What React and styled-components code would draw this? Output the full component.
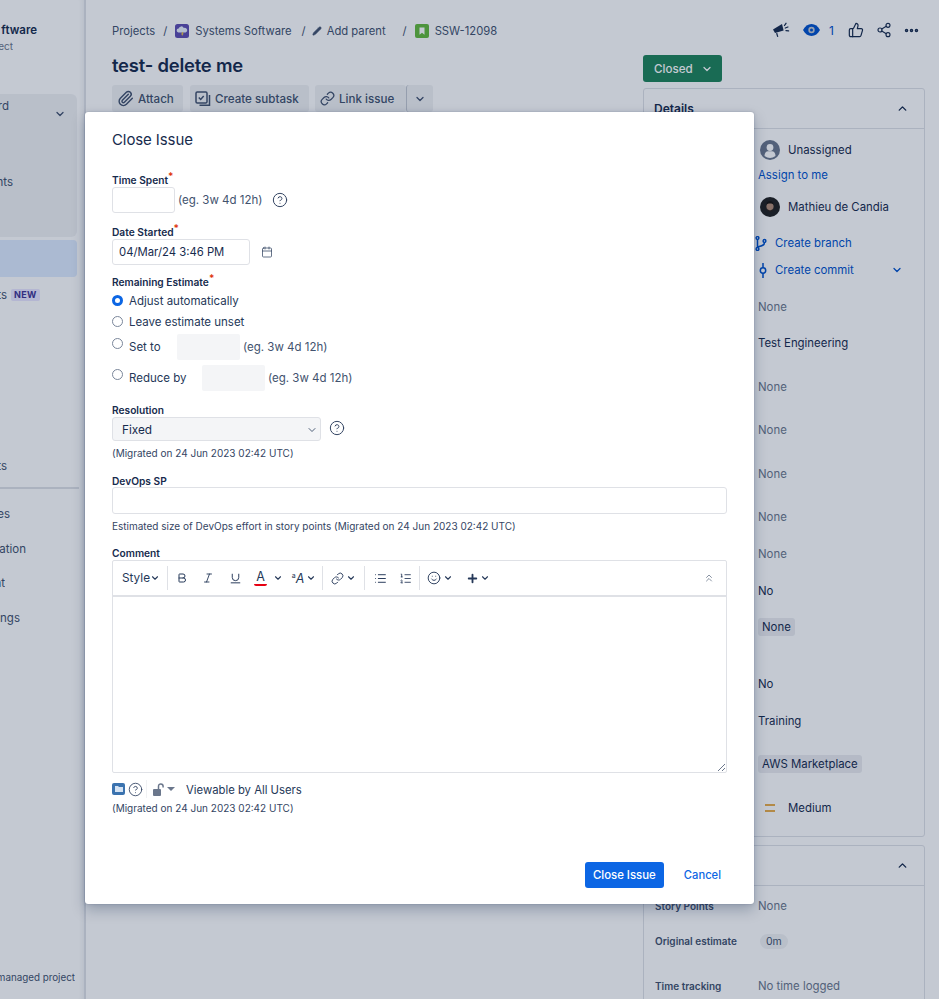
import React from 'react'
import styled, { createGlobalStyle } from 'styled-components'
import {
  Bold, Calendar, ChevronDown, ChevronUp, ChevronsUp, CircleHelp, Ellipsis, Italic, Link,
  List, ListOrdered, Paperclip, Pencil, Plus, Share2, Smile, ThumbsUp, Underline,
} from 'lucide-react'

const GlobalStyle = createGlobalStyle`
  html, body { margin: 0; padding: 0; background: #fff; }
  body { font-family: Inter, "Liberation Sans", sans-serif; color: #172b4d; }
  * { box-sizing: border-box; }
`

const Page = styled.div`
  position: relative;
  display: flex;
  width: 939px;
  height: 999px;
  overflow: hidden;
  font-size: 12px;
`
const Sidebar = styled.aside`
  width: 86px;
  flex: none;
  height: 100%;
  border-right: 2px solid #dfe1e6;
  box-shadow: inset -5px 0 4px -3px #f1f2f4;
  color: #42526e;
`
const SideText = styled.div`
  display: flex;
  justify-content: flex-end;
  align-items: center;
  width: ${p => p.$end}px;
  height: 16px;
  margin-top: ${p => p.$mt || 0}px;
  overflow: hidden;
  white-space: nowrap;
  font-size: ${p => p.$size || 11.5}px;
  font-weight: ${p => p.$weight || 400};
  color: ${p => p.$color || '#42526e'};
`
const SidePanel = styled.div`
  position: relative;
  width: 77px;
  height: 143px;
  margin-top: 40px;
  padding-top: 4px;
  border-radius: 0 6px 6px 0;
  background: #f1f2f4;
`
const SideChevron = styled.span`
  position: absolute;
  left: 54px;
  top: 14px;
  display: flex;
`
const SideActive = styled.div`
  width: 77px;
  height: 37px;
  margin-top: 3px;
  border-radius: 0 4px 4px 0;
  background: #deebff;
`
const SideRow = styled.div`
  display: flex;
  align-items: center;
  gap: 4px;
  margin-top: 10px;
`
const NewTag = styled.span`
  padding: 1px 3px;
  border-radius: 2px;
  background: #eae6ff;
  color: #403294;
  font-size: 9px;
  font-weight: 700;
  letter-spacing: .3px;
  line-height: 10px;
`
const SideDivider = styled.div`
  width: 79px;
  height: 2px;
  margin-top: 13px;
  background: #dfe1e6;
`

const Main = styled.main`
  width: 557px;
  flex: none;
  padding: 21px 0 0 26px;
`
const Crumbs = styled.nav`
  display: flex;
  align-items: center;
  height: 20px;
  font-size: 11.25px;
  color: #42526e;
`
const Crumb = styled.span`
  margin-left: ${p => p.$ml || 0}px;
  white-space: nowrap;
`
const CrumbIcon = styled.span`
  display: flex;
  margin-left: ${p => p.$ml || 0}px;
`
const Title = styled.h1`
  margin: 12px 0 0;
  height: 24px;
  font-size: 18.4px;
  line-height: 24px;
  font-weight: 600;
  letter-spacing: -.2px;
  color: #172b4d;
`
const Actions = styled.div`
  display: flex;
  margin-top: 8px;
`
const ActionButton = styled.button`
  display: flex;
  align-items: center;
  gap: 4px;
  width: ${p => p.$w}px;
  height: 27px;
  margin-left: ${p => p.$ml || 0}px;
  padding: 0 5px;
  border: 0;
  border-radius: 3px;
  background: #f1f2f4;
  font: 500 11.6px Inter, "Liberation Sans", sans-serif;
  color: #42526e;
  white-space: nowrap;
`
const SplitChevron = styled(ActionButton)`
  justify-content: center;
  border-left: 1px solid #c1c7d0;
`

const Side = styled.section`
  width: 282px;
  flex: none;
  padding-top: 20px;
`
const TopIcons = styled.div`
  position: relative;
  height: 20px;
  display: flex;
  align-items: center;
  color: #172b4d;
  padding-left: 129px;
`
const TopItem = styled.span`
  display: flex;
  align-items: center;
  margin-left: ${p => p.$ml || 0}px;
`
const WatchCount = styled.span`
  margin-left: 9px;
  color: #0052cc;
  font-size: 12px;
`
const StatusButton = styled.button`
  display: flex;
  align-items: center;
  gap: 8px;
  width: 79px;
  height: 27px;
  margin-top: 15px;
  padding: 0 0 0 11px;
  border: 0;
  border-radius: 3px;
  background: #1f845a;
  color: #fff;
  font: 500 11.6px Inter, "Liberation Sans", sans-serif;
`
const Panel = styled.div`
  margin-top: ${p => p.$mt}px;
  height: ${p => p.$h}px;
  border: 1px solid #dfe1e6;
  border-radius: 3px;
  overflow: hidden;
`
const PanelHead = styled.div`
  display: flex;
  align-items: center;
  justify-content: space-between;
  height: 40px;
  padding: 0 15px 0 10px;
  border-bottom: 1px solid #dfe1e6;
  font-size: 12px;
  font-weight: 600;
`
const ValueList = styled.div`
  padding-left: 114px;
`
const Value = styled.div`
  position: relative;
  display: flex;
  align-items: center;
  gap: ${p => p.$gap || 8}px;
  height: 20px;
  margin-top: ${p => p.$mt || 0}px;
  margin-left: ${p => p.$ml || 0}px;
  font-size: 11.4px;
  white-space: nowrap;
  color: ${p => (p.$muted ? '#6b778c' : p.$link ? '#0052cc' : '#172b4d')};
`
const TagText = styled.span`
  padding: 2px 4px;
  border-radius: 3px;
  background: #ebecf0;
`
const TrailChevron = styled.span`
  position: absolute;
  left: 132px;
  top: 4px;
  display: flex;
`
const TimeRow = styled.div`
  display: flex;
  align-items: center;
  height: 20px;
  margin-top: ${p => p.$mt}px;
  padding-left: 11px;
`
const TimeLabel = styled.span`
  width: 103px;
  font-size: 10px;
  font-weight: 600;
  color: #42526e;
  white-space: nowrap;
`
const TimeValue = styled.span`
  font-size: 11.4px;
  color: #6b778c;
`
const Pill = styled.span`
  margin-left: 2px;
  padding: 1px 6px;
  border-radius: 8px;
  background: #f1f2f4;
  font-size: 10.5px;
  color: #42526e;
`

const Backdrop = styled.div`
  position: absolute;
  inset: 0;
  background: rgba(9, 30, 66, .24);
`
const Modal = styled.div`
  position: absolute;
  left: 85px;
  top: 112px;
  width: 669px;
  height: 792px;
  padding: 17px 0 0 27px;
  background: #fff;
  border-radius: 3px;
  box-shadow: 0 0 1px rgba(9, 30, 66, .31), 0 6px 14px rgba(9, 30, 66, .25), 0 0 4px rgba(9, 30, 66, .12);
`
const ModalTitle = styled.h2`
  margin: 0;
  height: 22px;
  font-size: 15px;
  line-height: 22px;
  font-weight: 400;
  letter-spacing: -.1px;
  color: #172b4d;
`
const Label = styled.label`
  display: block;
  height: 13px;
  margin-top: ${p => p.$mt}px;
  font-size: 10.2px;
  line-height: 13px;
  font-weight: 600;
  color: #172b4d;
`
const Required = styled.sup`
  color: #de350b;
  font-size: 10px;
  line-height: 0;
`
const Row = styled.div`
  display: flex;
  align-items: center;
  height: ${p => p.$h || 26}px;
  margin-top: ${p => p.$mt || 0}px;
`
const TextInput = styled.input`
  width: ${p => p.$w}px;
  height: ${p => p.$h || 26}px;
  padding: 0 6px;
  border: 1px solid #dfe1e6;
  border-radius: 3px;
  background: #fff;
  font: 11.3px Inter, "Liberation Sans", sans-serif;
  color: #172b4d;
  outline: 0;
`
const GhostInput = styled.input`
  width: 63px;
  height: 26px;
  border: 0;
  border-radius: 2px;
  background: #f4f5f7;
`
const Hint = styled.span`
  margin-left: 3px;
  font-size: 11.5px;
  color: #42526e;
  white-space: nowrap;
`
const HelpIcon = styled.span`
  display: flex;
  margin-left: ${p => p.$ml}px;
  margin-top: ${p => p.$mt || 0}px;
  color: #344563;
`
const Radio = styled.span`
  flex: none;
  width: 11px;
  height: 11px;
  margin-top: ${p => p.$mt || 0}px;
  border-radius: 50%;
  border: ${p => (p.$on ? '3px solid #0c66e4' : '1px solid #7a869a')};
  box-shadow: ${p => (p.$on ? 'inset 0 0 0 1px #fff' : 'none')};
  background: #fff;
`
const RadioText = styled.span`
  width: ${p => p.$w || 'auto'};
  margin-left: 6px;
  margin-top: ${p => p.$mt || 0}px;
  font-size: 11.5px;
  color: #253858;
  white-space: nowrap;
`
const SelectBox = styled.div`
  display: flex;
  align-items: center;
  justify-content: space-between;
  width: 209px;
  height: 24px;
  padding: 1px 2px 0 9px;
  border: 1px solid #dfe1e6;
  border-radius: 3px;
  background: #f4f5f7;
  font-size: 11.8px;
  color: #172b4d;
`
const Note = styled.div`
  height: 14px;
  margin-top: ${p => p.$mt}px;
  font-size: 10px;
  line-height: 14px;
  color: #344563;
  white-space: nowrap;
`
const Editor = styled.div`
  position: relative;
  width: 615px;
  height: 213px;
  border: 1px solid #dfe1e6;
  border-radius: 2px;
`
const Toolbar = styled.div`
  display: flex;
  align-items: center;
  height: 36px;
  padding-left: 9px;
  border-bottom: 2px solid #dfe1e6;
  color: #253858;
`
const Tool = styled.span`
  display: flex;
  align-items: center;
  justify-content: center;
  width: ${p => p.$w}px;
  margin-left: ${p => p.$ml || 0}px;
  font-size: 11.8px;
`
const ToolSep = styled.span`
  width: 1px;
  height: 24px;
  margin-left: ${p => p.$ml}px;
  background: #dfe1e6;
`
const ColorA = styled.span`
  display: block;
  width: 13px;
  text-align: center;
  font-size: 12.5px;
  line-height: 14px;
  border-bottom: 2.5px solid #e60012;
  border-radius: 0 0 2px 2px;
`
const SmallA = styled.span`
  font-size: 12.5px;
  font-style: italic;
`
const SmallS = styled.span`
  font-size: 7px;
  margin-bottom: 6px;
`
const ResizeGrip = styled.svg`
  position: absolute;
  right: 0;
  bottom: 0;
`
const FolderBadge = styled.span`
  display: flex;
  align-items: center;
  justify-content: center;
  width: 13px;
  height: 12px;
  border-radius: 2px;
  background: #3b73af;
`
const FootSep = styled.span`
  width: 1px;
  height: 18px;
  margin-left: 3px;
  background: #f1f2f4;
`
const FootText = styled.span`
  margin-left: 11px;
  margin-top: 1px;
  font-size: 11.3px;
  color: #253858;
  white-space: nowrap;
`
const ModalActions = styled.div`
  display: flex;
  align-items: center;
  justify-content: flex-end;
  height: 26px;
  margin-top: 47px;
  padding-right: 33px;
`
const PrimaryButton = styled.button`
  width: 79px;
  height: 26px;
  padding: 0;
  border: 0;
  border-radius: 3px;
  background: #0c66e4;
  color: #fff;
  white-space: nowrap;
  font: 500 11.4px Inter, "Liberation Sans", sans-serif;
`
const LinkButton = styled.button`
  margin-left: 20px;
  padding: 0;
  border: 0;
  background: none;
  color: #0c66e4;
  font: 500 11.2px Inter, "Liberation Sans", sans-serif;
`

const Chev = ({ size = 12, color = 'currentColor' }) => <ChevronDown size={size} color={color} strokeWidth={2.6} />

const ProjectIcon = () => (
  <svg width="14" height="14" viewBox="0 0 14 14">
    <rect width="14" height="14" rx="2.5" fill="#5e4db2" />
    <path d="M3.4 8.4a1.9 1.9 0 0 1 .3-3.8 2.7 2.7 0 0 1 5.1-.7 2.2 2.2 0 0 1 1.8 4.5z" fill="#e9f0fb" />
    <path d="M7.4 8 6 10.4h1.3l-.6 2 2-2.9H7.6L8.4 8z" fill="#f5cd47" />
  </svg>
)
const StoryIcon = () => (
  <svg width="14" height="14" viewBox="0 0 14 14">
    <rect width="14" height="14" rx="2" fill="#63ba3c" />
    <path d="M4.5 3.5h5v7.2L7 8.7l-2.5 2z" fill="#fff" />
  </svg>
)
const SubtaskIcon = () => (
  <svg width="16" height="16" viewBox="0 0 16 16" fill="none" stroke="currentColor" strokeWidth="1.5">
    <rect x="1" y="1" width="11" height="11" rx="1.2" />
    <path d="m3.8 6.4 1.9 2 3-3.4" />
    <path d="M14.500 4v10.200H4.500" />
  </svg>
)
const Megaphone = () => (
  <svg width="18" height="16" viewBox="0 0 18 16" fill="#172b4d">
    <path d="M1 7.600 10 2l1.600 6.600L3 11z" />
    <path d="M4 11.200 5.200 15l1.100-.3-1-3.800z" />
    <path d="M12.500 3.500 14 1.300M13.300 6l2.600-1M14 8.600l2.600.3" stroke="#172b4d" strokeWidth="1.300" strokeLinecap="round" />
  </svg>
)
const EyeIcon = () => (
  <svg width="17" height="12" viewBox="0 0 17 12">
    <path d="M0 6c2-3.800 5-6 8.500-6S15 2.200 17 6c-2 3.800-5 6-8.500 6S2 9.800 0 6z" fill="#0052cc" />
    <circle cx="8.500" cy="6" r="3.200" fill="#c4c9d2" />
    <circle cx="8.500" cy="6" r="1.500" fill="#0052cc" />
  </svg>
)
const PersonIcon = () => (
  <svg width="20" height="20" viewBox="0 0 20 20">
    <circle cx="10" cy="10" r="10" fill="#6b778c" />
    <circle cx="10" cy="7.500" r="3.400" fill="#fff" />
    <path d="M4.500 16c0-3.200 1.500-4.800 3.500-4.800h4c2 0 3.500 1.600 3.500 4.800a9.500 9.500 0 0 1-11 0z" fill="#fff" />
  </svg>
)
const FaceAvatar = () => (
  <svg width="20" height="20" viewBox="0 0 20 20">
    <circle cx="10" cy="10" r="10" fill="#20201f" />
    <ellipse cx="10" cy="9.500" rx="3.600" ry="4.600" fill="#b08c76" />
    <path d="M6.200 8c.2-3 2-4 3.800-4s3.600 1 3.800 4c-1.200-1.300-2.200-1.600-3.800-1.600S7.400 6.700 6.200 8z" fill="#17130f" />
    <path d="M7.300 11.500c.8 2.400 4.600 2.400 5.400 0v2.300c-1 1.200-4.400 1.200-5.400 0z" fill="#2a211b" />
  </svg>
)
const BranchIcon = () => (
  <svg width="12" height="15" viewBox="0 0 12 15" fill="none" stroke="#0052cc" strokeWidth="1.500">
    <circle cx="2.500" cy="2" r="1.400" />
    <circle cx="2.500" cy="13" r="1.400" />
    <circle cx="9.500" cy="5" r="1.400" />
    <path d="M2.500 3.500v8M9.500 6.500c0 3-3 3.500-7 4.500" />
  </svg>
)
const CommitIcon = () => (
  <svg width="8" height="15" viewBox="0 0 8 15" fill="none" stroke="#0052cc" strokeWidth="1.500">
    <circle cx="4" cy="7.500" r="2.700" />
    <path d="M4 0v4.800M4 10.200V15" />
  </svg>
)
const MediumIcon = () => (
  <svg width="10" height="8" viewBox="0 0 10 8">
    <path d="M0 1h10M0 7h10" stroke="#e2930f" strokeWidth="1.600" />
  </svg>
)
const FolderIcon = () => (
  <svg width="8" height="6" viewBox="0 0 8 6">
    <path d="M0 0h3l1 1h4v5H0z" fill="#d5e3f3" />
  </svg>
)
const OpenLock = () => (
  <svg width="12" height="13" viewBox="0 0 12 13" fill="none">
    <rect x="0" y="6" width="8" height="7" rx="1" fill="#6b778c" />
    <path d="M5.500 6V3.200a2.300 2.300 0 0 1 4.600 0v1.300" stroke="#6b778c" strokeWidth="1.500" />
  </svg>
)
const Caret = () => (
  <svg width="8" height="4" viewBox="0 0 8 4">
    <path d="M0 0h8L4 4z" fill="#6b778c" />
  </svg>
)

export default function App() {
  return (
    <Page>
      <GlobalStyle />
      <Sidebar>
        <SideText $end={37} $mt={22} $weight={600} $color="#172b4d">ftware</SideText>
        <SideText $end={13} $size={10} $color="#6b778c">ect</SideText>
        <SidePanel>
          <SideText $end={9}>rd</SideText>
          <SideChevron><Chev /></SideChevron>
          <SideText $end={13} $mt={60}>nts</SideText>
        </SidePanel>
        <SideActive />
        <SideRow>
          <SideText $end={7}>ts</SideText>
          <NewTag>NEW</NewTag>
        </SideRow>
        <SideText $end={7} $mt={155}>ts</SideText>
        <SideDivider />
        <SideText $end={10} $mt={17}>es</SideText>
        <SideText $end={26} $mt={19}>ation</SideText>
        <SideText $end={5} $mt={18}>nt</SideText>
        <SideText $end={20} $mt={19}>ngs</SideText>
        <SideText $end={75} $mt={343} $size={9.8}>managed project</SideText>
      </Sidebar>

      <Main>
        <Crumbs>
          <Crumb>Projects</Crumb>
          <Crumb $ml={8}>/</Crumb>
          <CrumbIcon $ml={8}><ProjectIcon /></CrumbIcon>
          <Crumb $ml={6}>Systems Software</Crumb>
          <Crumb $ml={10}>/</Crumb>
          <CrumbIcon $ml={6}><Pencil size={10} fill="#42526e" strokeWidth={1.5} /></CrumbIcon>
          <Crumb $ml={5}>Add parent</Crumb>
          <Crumb $ml={17}>/</Crumb>
          <CrumbIcon $ml={8}><StoryIcon /></CrumbIcon>
          <Crumb $ml={6}>SSW-12098</Crumb>
        </Crumbs>
        <Title>test- delete me</Title>
        <Actions>
          <ActionButton $w={71}><Paperclip size={17} strokeWidth={2} />Attach</ActionButton>
          <ActionButton $w={119} $ml={7}><SubtaskIcon />Create subtask</ActionButton>
          <ActionButton $w={91} $ml={6}><Link size={15} strokeWidth={2} />Link issue</ActionButton>
          <SplitChevron $w={27}><Chev /></SplitChevron>
        </Actions>
      </Main>

      <Side>
        <TopIcons>
          <TopItem><Megaphone /></TopItem>
          <TopItem $ml={13}><EyeIcon /><WatchCount>1</WatchCount></TopItem>
          <TopItem $ml={14}><ThumbsUp size={16} strokeWidth={1.8} /></TopItem>
          <TopItem $ml={12}><Share2 size={16} strokeWidth={1.7} /></TopItem>
          <TopItem $ml={11}><Ellipsis size={17} strokeWidth={3} /></TopItem>
        </TopIcons>
        <StatusButton>Closed<Chev /></StatusButton>
        <Panel $mt={6} $h={749}>
          <PanelHead>Details<ChevronUp size={13} strokeWidth={2.6} /></PanelHead>
          <ValueList>
            <Value $mt={11} $ml={2}><PersonIcon />Unassigned</Value>
            <Value $mt={5} $link>Assign to me</Value>
            <Value $mt={12} $ml={2}><FaceAvatar />Mathieu de Candia</Value>
            <Value $mt={16} $ml={-3} $link><BranchIcon />Create branch</Value>
            <Value $mt={7} $ml={1} $link $gap={8}><CommitIcon />Create commit<TrailChevron><Chev /></TrailChevron></Value>
            <Value $mt={17} $muted>None</Value>
            <Value $mt={16}>Test Engineering</Value>
            <Value $mt={24} $muted>None</Value>
            <Value $mt={23} $muted>None</Value>
            <Value $mt={24} $muted>None</Value>
            <Value $mt={23} $muted>None</Value>
            <Value $mt={17} $muted>None</Value>
            <Value $mt={17}>No</Value>
            <Value $mt={16}><TagText>None</TagText></Value>
            <Value $mt={37}>No</Value>
            <Value $mt={17}>Training</Value>
            <Value $mt={23}><TagText>AWS Marketplace</TagText></Value>
            <Value $mt={24} $ml={7} $gap={13}><MediumIcon />Medium</Value>
          </ValueList>
        </Panel>
        <Panel $mt={8} $h={160}>
          <PanelHead><span />
            <ChevronUp size={13} strokeWidth={2.6} />
          </PanelHead>
          <TimeRow $mt={10}><TimeLabel>Story Points</TimeLabel><TimeValue>None</TimeValue></TimeRow>
          <TimeRow $mt={15}><TimeLabel>Original estimate</TimeLabel><Pill>0m</Pill></TimeRow>
          <TimeRow $mt={25}><TimeLabel>Time tracking</TimeLabel><TimeValue>No time logged</TimeValue></TimeRow>
        </Panel>
      </Side>

      <Backdrop />

      <Modal>
        <ModalTitle>Close Issue</ModalTitle>

        <Label $mt={23}>Time Spent<Required>*</Required></Label>
        <Row>
          <TextInput $w={63} />
          <Hint>(eg. 3w 4d 12h)</Hint>
          <HelpIcon $ml={9}><CircleHelp size={16} strokeWidth={1.5} /></HelpIcon>
        </Row>

        <Label $mt={13}>Date Started<Required>*</Required></Label>
        <Row>
          <TextInput $w={138} defaultValue="04/Mar/24 3:46 PM" />
          <HelpIcon $ml={11}><Calendar size={12} strokeWidth={1.5} /></HelpIcon>
        </Row>

        <Label $mt={11}>Remaining Estimate<Required>*</Required></Label>
        <Row $h={20} $mt={1}><Radio $on /><RadioText $mt={1}>Adjust automatically</RadioText></Row>
        <Row $h={20} $mt={1}><Radio /><RadioText $mt={1}>Leave estimate unset</RadioText></Row>
        <Row $mt={3}>
          <Radio $mt={-8} />
          <RadioText $w="48px" $mt={-1}>Set to</RadioText>
          <GhostInput />
          <Hint>(eg. 3w 4d 12h)</Hint>
        </Row>
        <Row $mt={5}>
          <Radio $mt={-8} />
          <RadioText $w="73px" $mt={-1}>Reduce by</RadioText>
          <GhostInput />
          <Hint>(eg. 3w 4d 12h)</Hint>
        </Row>

        <Label $mt={13}>Resolution</Label>
        <Row $h={24}>
          <SelectBox>Fixed<ChevronDown size={12} color="#253858" strokeWidth={1.6} /></SelectBox>
          <HelpIcon $ml={8} $mt={-3}><CircleHelp size={16} strokeWidth={1.5} /></HelpIcon>
        </Row>
        <Note $mt={5}>(Migrated on 24 Jun 2023 02:42 UTC)</Note>

        <Label $mt={15}>DevOps SP</Label>
        <Row $h={27} $mt={-1}><TextInput $w={615} $h={27} /></Row>
        <Note $mt={5}>Estimated size of DevOps effort in story points (Migrated on 24 Jun 2023 02:42 UTC)</Note>

        <Label $mt={14}>Comment</Label>
        <Editor>
          <Toolbar>
            <Tool $w={28}>Style</Tool>
            <Tool $w={10}><Chev size={10} /></Tool>
            <ToolSep $ml={7} />
            <Tool $w={14} $ml={7}><Bold size={12} strokeWidth={2} /></Tool>
            <Tool $w={14} $ml={12}><Italic size={12} strokeWidth={1.8} /></Tool>
            <Tool $w={14} $ml={13}><Underline size={13} strokeWidth={1.8} /></Tool>
            <Tool $w={13} $ml={12}><ColorA>A</ColorA></Tool>
            <Tool $w={10} $ml={6}><Chev size={10} /></Tool>
            <Tool $w={16} $ml={7}><SmallS>a</SmallS><SmallA>A</SmallA></Tool>
            <Tool $w={10}><Chev size={10} /></Tool>
            <ToolSep $ml={6} />
            <Tool $w={14} $ml={7}><Link size={13} strokeWidth={1.7} /></Tool>
            <Tool $w={10} $ml={2}><Chev size={10} /></Tool>
            <ToolSep $ml={8} />
            <Tool $w={14} $ml={8}><List size={13} strokeWidth={1.8} /></Tool>
            <Tool $w={14} $ml={11}><ListOrdered size={13} strokeWidth={1.6} /></Tool>
            <ToolSep $ml={7} />
            <Tool $w={14} $ml={7}><Smile size={14} strokeWidth={1.6} /></Tool>
            <Tool $w={10} $ml={2}><Chev size={10} /></Tool>
            <Tool $w={14} $ml={12}><Plus size={13} strokeWidth={3.4} /></Tool>
            <Tool $w={10} $ml={1}><Chev size={10} /></Tool>
            <Tool $w={14} $ml={212}><ChevronsUp size={12} color="#6b778c" strokeWidth={1.6} /></Tool>
          </Toolbar>
          <ResizeGrip width="9" height="9" viewBox="0 0 9 9">
            <path d="M1 8 8 1M5 8l3-3" stroke="#6b778c" strokeWidth="1" />
          </ResizeGrip>
        </Editor>

        <Row $h={18} $mt={7}>
          <FolderBadge><FolderIcon /></FolderBadge>
          <HelpIcon $ml={3}><CircleHelp size={15} strokeWidth={1.4} /></HelpIcon>
          <FootSep />
          <HelpIcon $ml={6}><OpenLock /></HelpIcon>
          <HelpIcon $ml={2}><Caret /></HelpIcon>
          <FootText>Viewable by All Users</FootText>
        </Row>
        <Note $mt={3}>(Migrated on 24 Jun 2023 02:42 UTC)</Note>

        <ModalActions>
          <PrimaryButton>Close Issue</PrimaryButton>
          <LinkButton>Cancel</LinkButton>
        </ModalActions>
      </Modal>
    </Page>
  )
}
